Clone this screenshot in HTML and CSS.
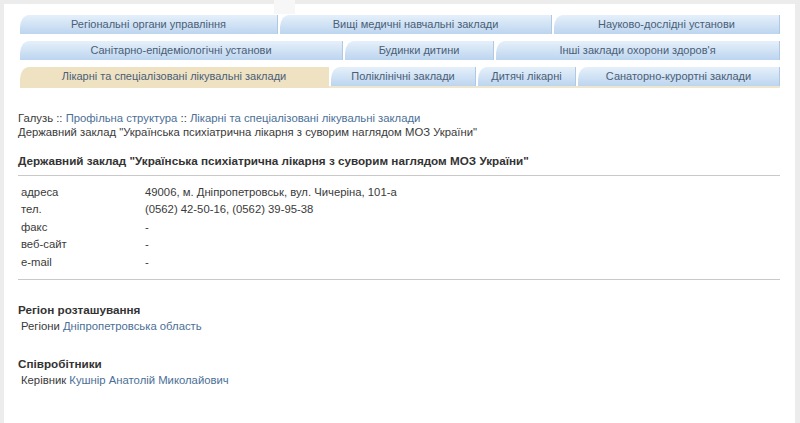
FILE: index.html
```html
<!DOCTYPE html>
<html lang="uk">
<head>
<meta charset="utf-8">
<title>Державний заклад</title>
<link rel="stylesheet" href="styles.css">
</head>
<body>
<div class="notch"></div>
<div class="page">
  <nav class="tabs">
    <div class="row">
      <a class="tab w258">Регіональні органи управління</a>
      <a class="tab w272">Вищі медичні навчальні заклади</a>
      <a class="tab grow">Науково-дослідні установи</a>
    </div>
    <div class="row">
      <a class="tab w322">Санітарно-епідеміологічні установи</a>
      <a class="tab w148">Будинки дитини</a>
      <a class="tab grow">Інші заклади охорони здоров'я</a>
    </div>
    <div class="row last">
      <a class="tab active w308">Лікарні та спеціалізовані лікувальні заклади</a>
      <a class="tab w144">Поліклінічні заклади</a>
      <a class="tab w97">Дитячі лікарні</a>
      <a class="tab grow">Санаторно-курортні заклади</a>
    </div>
  </nav>

  <div class="crumbs">
    <div>Галузь :: <a>Профільна структура</a> :: <a>Лікарні та спеціалізовані лікувальні заклади</a></div>
    <div>Державний заклад "Українська психіатрична лікарня з суворим наглядом МОЗ України"</div>
  </div>

  <h1 class="title">Державний заклад "Українська психіатрична лікарня з суворим наглядом МОЗ України"</h1>

  <div class="info">
    <span class="k">адреса</span><span>49006, м. Дніпропетровськ, вул. Чичеріна, 101-а</span>
    <span class="k">тел.</span><span>(0562) 42-50-16, (0562) 39-95-38</span>
    <span class="k">факс</span><span>-</span>
    <span class="k">веб-сайт</span><span>-</span>
    <span class="k">e-mail</span><span>-</span>
  </div>

  <section class="block">
    <h2>Регіон розташування</h2>
    <p>Регіони <a>Дніпропетровська область</a></p>
  </section>

  <section class="block">
    <h2>Співробітники</h2>
    <p>Керівник <a>Кушнір Анатолій Миколайович</a></p>
  </section>
</div>
</body>
</html>
```

FILE: styles.css
```css
html, body {
  margin: 0;
  padding: 0;
}
body {
  background: #ececec;
  font-family: "Liberation Sans", Arial, sans-serif;
  font-size: 11.3px;
  color: #3a3a3a;
  height: 423px;
  overflow: hidden;
  position: relative;
}
a {
  color: #4b6f96;
  text-decoration: none;
}
.notch {
  position: absolute;
  left: 274px;
  top: 0;
  width: 21px;
  height: 14px;
  background: #f7f7f7;
}
.page {
  margin: 4px 5px 0 4px;
  background: #fff;
  min-height: 430px;
  padding: 11px 15px 0 14px;
  box-sizing: border-box;
}
.tabs {
  display: flex;
  flex-direction: column;
  gap: 7px;
  margin-left: 2px;
}
.row {
  display: flex;
  gap: 2px;
}
.row.last {
  border-bottom: 2px solid #efe6cf;
}
.tab {
  height: 19px;
  line-height: 19px;
  text-align: center;
  color: #4a5e76;
  background: linear-gradient(#e6f0fa, #bcd5ef);
  border-top-left-radius: 9px 12px;
  border-right: 1px solid #b0c8e2;
  box-sizing: border-box;
  white-space: nowrap;
  font-size: 11px;
}
.tab.active {
  background: #efe2c3;
  border-right-color: #efe2c3;
  height: 21px;
  margin-bottom: -2px;
}
.w258 { width: 258px; }
.w272 { width: 272px; }
.w322 { width: 323px; }
.w148 { width: 149px; }
.w308 { width: 309px; }
.w144 { width: 145px; }
.w97 { width: 98px; }
.grow { flex: 1; }

.crumbs {
  margin-top: 23px;
  line-height: 14px;
}
.title {
  font-size: 11.7px;
  font-weight: bold;
  margin: 14px 0 0 0;
  line-height: 16px;
  color: #333;
  padding-bottom: 6px;
  border-bottom: 1px solid #c9c9c9;
}
.info {
  display: grid;
  grid-template-columns: 127px 1fr;
  line-height: 17.5px;
  padding: 7.5px 0 8px;
  border-bottom: 1px solid #c9c9c9;
}
.info .k {
  padding-left: 3px;
}
.block {
  margin-top: 22px;
}
.block h2 {
  font-size: 11.7px;
  font-weight: bold;
  margin: 0;
  line-height: 16px;
  color: #333;
}
.block p {
  margin: 0 0 0 3px;
  line-height: 16px;
}
```
